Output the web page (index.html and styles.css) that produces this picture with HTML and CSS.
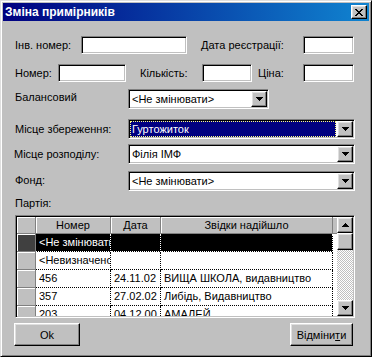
FILE: index.html
```html
<!DOCTYPE html>
<html lang="uk">
<head>
    <meta charset="UTF-8">
    <title>Зміна примірників</title>
    <link rel="stylesheet" href="styles.css">
</head>
<body>

<div class="window">
    <div class="titlebar">
        <span class="title">Зміна примірників</span>
        <span class="close-btn">
            <svg width="8" height="7" viewBox="0 0 8 7" shape-rendering="crispEdges"><path d="M0 0h2v1H0zM6 0h2v1H6zM1 1h2v1H1zM5 1h2v1H5zM2 2h4v1H2zM3 3h2v1H3zM2 4h4v1H2zM1 5h2v1H1zM5 5h2v1H5zM0 6h2v1H0zM6 6h2v1H6z"/></svg>
        </span>
    </div>

    <div class="content">
        <div class="row row-ids">
            <span class="lbl" style="width:66px">Інв. номер:</span>
            <div class="edit" style="width:106px"></div>
            <span class="lbl" style="width:102px; margin-left:14px">Дата реєстрації:</span>
            <div class="edit" style="width:51px"></div>
        </div>

        <div class="row row-counts">
            <span class="lbl" style="width:43px">Номер:</span>
            <div class="edit" style="width:68px"></div>
            <span class="lbl" style="width:62px; margin-left:14px">Кількість:</span>
            <div class="edit" style="width:50px"></div>
            <span class="lbl" style="width:45px; margin-left:6px">Ціна:</span>
            <div class="edit" style="width:51px"></div>
        </div>

        <div class="row row-balance">
            <span class="lbl combo-lbl">Балансовий</span>
            <div class="combo combo-short">
                <span class="combo-text">&lt;Не змінювати&gt;</span>
                <span class="drop-btn"><svg width="7" height="4" viewBox="0 0 7 4" shape-rendering="crispEdges"><path d="M0 0h7v1H0zM1 1h5v1H1zM2 2h3v1H2zM3 3h1v1H3z"/></svg></span>
            </div>
        </div>

        <div class="row row-store">
            <span class="lbl combo-lbl">Місце збереження:</span>
            <div class="combo">
                <span class="combo-text focused">Гуртожиток</span>
                <span class="drop-btn"><svg width="7" height="4" viewBox="0 0 7 4" shape-rendering="crispEdges"><path d="M0 0h7v1H0zM1 1h5v1H1zM2 2h3v1H2zM3 3h1v1H3z"/></svg></span>
            </div>
        </div>

        <div class="row row-distr">
            <span class="lbl combo-lbl shift">Місце розподілу:</span>
            <div class="combo">
                <span class="combo-text">Філія ІМФ</span>
                <span class="drop-btn"><svg width="7" height="4" viewBox="0 0 7 4" shape-rendering="crispEdges"><path d="M0 0h7v1H0zM1 1h5v1H1zM2 2h3v1H2zM3 3h1v1H3z"/></svg></span>
            </div>
        </div>

        <div class="row row-fund">
            <span class="lbl combo-lbl">Фонд:</span>
            <div class="combo">
                <span class="combo-text">&lt;Не змінювати&gt;</span>
                <span class="drop-btn"><svg width="7" height="4" viewBox="0 0 7 4" shape-rendering="crispEdges"><path d="M0 0h7v1H0zM1 1h5v1H1zM2 2h3v1H2zM3 3h1v1H3z"/></svg></span>
            </div>
        </div>

        <div class="batch-lbl">Партія:</div>

        <div class="grid">
            <div class="cells">
                <div class="fixed"></div>
                <div class="fixed head">Номер</div>
                <div class="fixed head">Дата</div>
                <div class="fixed head">Звідки надійшло</div>
                <div class="fixed filler"></div>

                <div class="fixed current"></div>
                <div class="cell sel">&lt;Не змінювати&gt;</div>
                <div class="cell sel"></div>
                <div class="cell sel"></div>
                <div class="filler"></div>

                <div class="fixed"></div>
                <div class="cell">&lt;Невизначено&gt;</div>
                <div class="cell"></div>
                <div class="cell"></div>
                <div class="filler"></div>

                <div class="fixed"></div>
                <div class="cell">456</div>
                <div class="cell">24.11.02</div>
                <div class="cell">ВИЩА ШКОЛА, видавництво</div>
                <div class="filler"></div>

                <div class="fixed"></div>
                <div class="cell">357</div>
                <div class="cell">27.02.02</div>
                <div class="cell">Либідь, Видавництво</div>
                <div class="filler"></div>

                <div class="fixed"></div>
                <div class="cell">203</div>
                <div class="cell">04.12.00</div>
                <div class="cell">АМАЛЕЙ</div>
                <div class="filler"></div>
            </div>
            <div class="scrollbar">
                <span class="sb-btn"><svg width="7" height="4" viewBox="0 0 7 4" shape-rendering="crispEdges"><path d="M3 0h1v1H3zM2 1h3v1H2zM1 2h5v1H1zM0 3h7v1H0z"/></svg></span>
                <span class="thumb"></span>
                <span class="track"></span>
                <span class="sb-btn"><svg width="7" height="4" viewBox="0 0 7 4" shape-rendering="crispEdges"><path d="M0 0h7v1H0zM1 1h5v1H1zM2 2h3v1H2zM3 3h1v1H3z"/></svg></span>
            </div>
        </div>

        <div class="actions">
            <button class="btn btn-ok">Ok</button>
            <button class="btn btn-cancel">Відміни<u>т</u>и</button>
        </div>
    </div>
</div>

</body>
</html>
```

FILE: styles.css
```css
* {
    box-sizing: border-box;
}
body {
    margin: 0;
    font-family: "Liberation Sans", Arial, sans-serif;
    font-size: 11px;
    line-height: 13px;
    color: #000;
}
.window {
    width: 372px;
    height: 357px;
    background-color: #c0c0c0;
    border: 1px solid;
    border-color: #dfdfdf #000 #000 #dfdfdf;
    box-shadow: inset 1px 1px #fff, inset -1px -1px #808080;
    padding: 2px;
}
.titlebar {
    height: 18px;
    display: flex;
    align-items: center;
    justify-content: space-between;
    padding: 0 2px;
    background: linear-gradient(to right, #000080, #1084d0);
    color: #fff;
    font-size: 12px;
    font-weight: bold;
}
.close-btn,
.drop-btn,
.sb-btn,
.thumb,
.btn {
    background-color: #c0c0c0;
    border: 1px solid;
    border-color: #fff #000 #000 #fff;
    box-shadow: inset -1px -1px #808080, inset 1px 1px #dfdfdf;
    display: flex;
    align-items: center;
    justify-content: center;
}
.close-btn {
    width: 16px;
    height: 14px;
}
.content {
    padding: 15px 14px 0 12px;
}
.row {
    display: flex;
    align-items: center;
}
.lbl {
    flex: none;
    white-space: nowrap;
}
.row-counts {
    margin-top: 10px;
}
.row-balance {
    margin-top: 7px;
}
.row-store {
    margin-top: 10px;
}
.row-distr {
    margin-top: 5px;
}
.row-fund {
    margin-top: 7px;
}
.combo-lbl {
    width: 113px;
}
.combo-lbl.shift {
    margin-left: -1px;
    width: 114px;
}
.row-balance .combo-lbl {
    margin-top: -3px;
}
.row-fund .combo-lbl {
    margin-top: -2px;
}
.edit,
.combo {
    height: 18px;
    background-color: #fff;
    border: 1px solid;
    border-color: #808080 #fff #fff #808080;
    box-shadow: inset 1px 1px #000, inset -1px -1px #c0c0c0;
}
.combo {
    height: 20px;
    width: 227px;
    display: flex;
    padding: 1px;
}
.combo-short {
    width: 141px;
}
.combo-text {
    flex: 1;
    padding-left: 2px;
    line-height: 16px;
    white-space: nowrap;
    overflow: hidden;
}
.combo-text.focused {
    background-color: #000080;
    color: #fff;
    outline: 1px dotted #ffff80;
    outline-offset: -1px;
    margin-right: 1px;
}
.drop-btn {
    width: 16px;
}
.batch-lbl {
    margin-top: 6px;
}
.grid {
    margin-top: 5px;
    width: 340px;
    height: 103px;
    display: flex;
    background-color: #fff;
    border: 1px solid;
    border-color: #808080 #fff #fff #808080;
    box-shadow: inset 1px 1px #000, inset -1px -1px #c0c0c0;
    padding: 1px;
}
.cells {
    flex: 1;
    display: grid;
    grid-template-columns: 19px 75px 50px 172px 4px;
    grid-template-rows: 17px;
    grid-auto-rows: 18px;
    align-content: start;
    overflow: hidden;
}
.fixed {
    background-color: #c0c0c0;
    border-right: 1px solid #808080;
    border-bottom: 1px solid #808080;
    box-shadow: inset 1px 1px #fff;
}
.fixed.current {
    background-color: #404040;
}
.head {
    text-align: center;
    line-height: 16px;
    white-space: nowrap;
    overflow: hidden;
}
.fixed.filler {
    border-right: none;
    box-shadow: inset 0 1px #fff;
}
.cell {
    padding: 0 3px;
    line-height: 17px;
    white-space: nowrap;
    overflow: hidden;
    border-right: 1px dotted #000;
    border-bottom: 1px dotted #000;
}
.cell.sel {
    background-color: #000;
    color: #fff;
    border-color: #fff;
}
.scrollbar {
    width: 16px;
    display: flex;
    flex-direction: column;
}
.sb-btn {
    height: 16px;
}
.thumb {
    height: 17px;
}
.track {
    flex: 1;
    background-image: repeating-conic-gradient(#c0c0c0 0 25%, #fff 0 50%);
    background-size: 2px 2px;
}
.actions {
    margin-top: 5px;
    display: flex;
    justify-content: space-between;
}
.btn {
    height: 23px;
    padding: 0;
    font-family: inherit;
    font-size: 11px;
    color: #000;
}
.btn-ok {
    width: 66px;
    margin-left: -1px;
}
.btn-cancel {
    width: 63px;
    margin-right: 2px;
}
```
